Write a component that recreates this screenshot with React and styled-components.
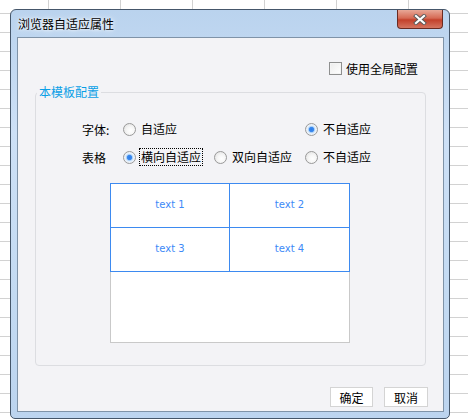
import styled, { createGlobalStyle } from "styled-components";

const GlobalStyle = createGlobalStyle`
  html, body {
    margin: 0;
    padding: 0;
  }
  body {
    font-family: "Noto Sans CJK SC", "Noto Sans", sans-serif;
    font-size: 12px;
    color: #000;
  }
`;

const Desktop = styled.div`
  width: 468px;
  height: 419px;
  overflow: hidden;
  box-sizing: border-box;
  padding: 9px 0 0 10px;
  background-color: #fff;
  background-image: linear-gradient(to right, #d2d2d2 1px, transparent 1px),
    linear-gradient(to bottom, #d2d2d2 1px, transparent 1px);
  background-size: 72px 100%, 100% 19px;
  background-position: 48px 0, 0 13px;
`;

const Window = styled.div`
  width: 440px;
  height: 410px;
  box-sizing: border-box;
  border: 1px solid #45566a;
  border-radius: 6px 6px 5px 5px;
  background: linear-gradient(to bottom, #bad3ee, #cde0f6 30%, #c3daf2 70%, #bcd4ef);
  padding: 0 5px 6px 6px;
  display: flex;
  flex-direction: column;
`;

const TitleBar = styled.div`
  height: 27px;
  display: flex;
  justify-content: space-between;
  align-items: flex-start;
`;

const Title = styled.span`
  padding-left: 1px;
  line-height: 27px;
  font-size: 12px;
  text-shadow: 0 0 6px #fff, 0 0 3px #fff;
`;

const CloseButton = styled.div`
  width: 46px;
  height: 19px;
  box-sizing: border-box;
  margin-right: 1px;
  border: 1px solid #6a2b22;
  border-top: none;
  border-radius: 0 0 4px 4px;
  background: linear-gradient(to bottom, #e8a897, #d66a54 45%, #c3412b 55%, #d57560);
  display: flex;
  align-items: center;
  justify-content: center;
`;

const Content = styled.div`
  height: 375px;
  box-sizing: border-box;
  border: 1px solid #7f93a8;
  background: #f3f3f6;
  display: flex;
  flex-direction: column;
  padding: 20px 0 4px;
`;

const TopRow = styled.div`
  height: 20px;
  display: flex;
  justify-content: flex-end;
  align-items: center;
  gap: 4px;
  padding-right: 25px;
`;

const Checkbox = styled.span`
  width: 13px;
  height: 13px;
  box-sizing: border-box;
  border: 1px solid #8e8f8f;
  background: linear-gradient(135deg, #ececec, #fff);
  box-shadow: inset 0 0 0 1px #f4f4f4;
`;

const Group = styled.fieldset`
  margin: 6px 17px 0;
  padding: 0;
  min-width: 0;
  border: 1px solid #dcdde1;
  border-radius: 4px;
`;

const Legend = styled.legend`
  margin-left: 1px;
  padding: 0 2px;
  line-height: 16px;
  font-size: 12px;
  color: #0a9fe6;
`;

const GroupBody = styled.div`
  padding: 19px 0 22px 46px;
`;

const Options = styled.div`
  display: grid;
  grid-template-columns: 41px 91px 91px 91px;
  grid-auto-rows: 20px;
  row-gap: 8px;
  align-items: center;
`;

const Option = styled.label`
  display: flex;
  align-items: center;
  gap: 4px;
  grid-column: ${(p) => p.$col || "auto"};
`;

const Radio = styled.span`
  width: 13px;
  height: 13px;
  flex: none;
  box-sizing: border-box;
  border-radius: 50%;
  border: 1px solid #999;
  background: ${(p) =>
    p.$checked
      ? "radial-gradient(circle, #2c7de6 0, #3b88ee 2.2px, #a9cff6 3px, #e2eefb 4px, #f4f4f4 6px)"
      : "radial-gradient(circle at 60% 60%, #fff 0, #f6f6f6 40%, #dcdcdc 100%)"};
`;

const OptionText = styled.span`
  line-height: 16px;
  padding: 0 1px;
  outline: ${(p) => (p.$focused ? "1px dotted #000" : "none")};
`;

const Preview = styled.div`
  width: 240px;
  margin: 16px 0 0 28px;
`;

const CellGrid = styled.div`
  display: grid;
  grid-template-columns: 118px 119px;
  grid-template-rows: 43px 43px;
  gap: 1px;
  padding: 1px;
  background: #3d8af0;
`;

const Cell = styled.div`
  background: #fff;
  display: flex;
  align-items: center;
  justify-content: center;
  font-family: "DejaVu Sans", sans-serif;
  font-size: 10px;
  color: #3d8af7;
  padding-bottom: 3px;
  box-sizing: border-box;
`;

const Blank = styled.div`
  height: 71px;
  box-sizing: border-box;
  border: 1px solid #c9c9c9;
  border-top: none;
  background: #fff;
`;

const Footer = styled.div`
  margin-top: auto;
  display: flex;
  justify-content: flex-end;
  gap: 11px;
  padding-right: 15px;
`;

const Button = styled.button`
  width: ${(p) => p.$w}px;
  height: 20px;
  padding: 0;
  border: 1px solid #d4d4d4;
  background: #fff;
  font-family: inherit;
  font-size: 12px;
  color: #000;
`;

const CloseIcon = () => (
  <svg width="14" height="11" viewBox="0 0 14 11">
    <path d="M3 2 L11 9 M11 2 L3 9" stroke="#5a5a5a" strokeWidth="4" strokeLinecap="square" />
    <path d="M3 2 L11 9 M11 2 L3 9" stroke="#fff" strokeWidth="2.2" strokeLinecap="square" />
  </svg>
);

export default function App() {
  return (
    <>
      <GlobalStyle />
      <Desktop>
        <Window>
          <TitleBar>
            <Title>浏览器自适应属性</Title>
            <CloseButton>
              <CloseIcon />
            </CloseButton>
          </TitleBar>
          <Content>
            <TopRow>
              <Checkbox />
              <span>使用全局配置</span>
            </TopRow>
            <Group>
              <Legend>本模板配置</Legend>
              <GroupBody>
                <Options>
                  <span>字体:</span>
                  <Option>
                    <Radio />
                    <OptionText>自适应</OptionText>
                  </Option>
                  <Option $col={4}>
                    <Radio $checked />
                    <OptionText>不自适应</OptionText>
                  </Option>
                  <span>表格</span>
                  <Option>
                    <Radio $checked />
                    <OptionText $focused>横向自适应</OptionText>
                  </Option>
                  <Option>
                    <Radio />
                    <OptionText>双向自适应</OptionText>
                  </Option>
                  <Option>
                    <Radio />
                    <OptionText>不自适应</OptionText>
                  </Option>
                </Options>
                <Preview>
                  <CellGrid>
                    <Cell>text 1</Cell>
                    <Cell>text 2</Cell>
                    <Cell>text 3</Cell>
                    <Cell>text 4</Cell>
                  </CellGrid>
                  <Blank />
                </Preview>
              </GroupBody>
            </Group>
            <Footer>
              <Button $w={43}>确定</Button>
              <Button $w={44}>取消</Button>
            </Footer>
          </Content>
        </Window>
      </Desktop>
    </>
  );
}
